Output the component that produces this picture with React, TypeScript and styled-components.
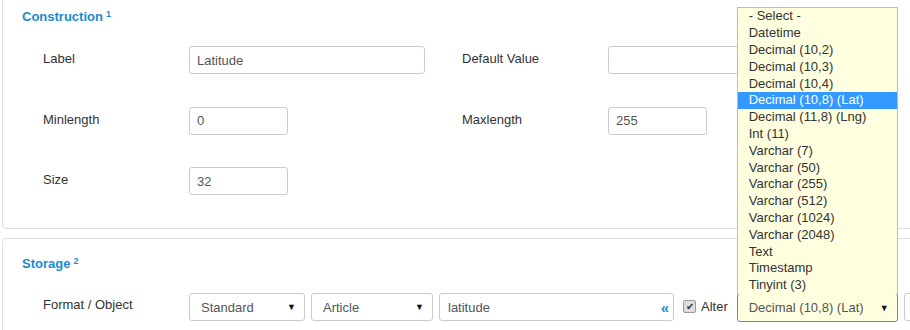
import React from 'react';
import styled, { createGlobalStyle } from 'styled-components';

const GlobalStyle = createGlobalStyle`
  html, body {
    margin: 0;
    padding: 0;
    background: #fff;
    overflow: hidden;
  }
  body {
    font-family: "Liberation Sans", Arial, sans-serif;
    font-size: 13px;
    color: #333;
  }
`;

const Page = styled.div`
  width: 910px;
  height: 330px;
  padding-left: 2px;
  box-sizing: border-box;
  overflow: hidden;
`;

const Panel = styled.section<{ $first?: boolean }>`
  width: 940px;
  box-sizing: border-box;
  border: 1px solid #dedede;
  border-radius: 4px;
  background: #fff;
  margin-top: ${p => (p.$first ? '-9px' : '9px')};
  padding: 16px 0 33px 19px;
`;

const Title = styled.h3<{ $gap: number }>`
  margin: 0 0 ${p => p.$gap}px;
  font-size: 13px;
  line-height: 18px;
  font-weight: bold;
  color: #1a8bd0;

  sup {
    font-size: 9px;
    vertical-align: top;
    line-height: 12px;
    margin-left: 3px;
  }
`;

const Row = styled.div`
  display: flex;
  align-items: flex-start;
  padding-left: 21px;
  margin-bottom: 32.5px;

  &:last-child {
    margin-bottom: 0;
  }
`;

const Group = styled.div`
  display: flex;
  align-items: flex-start;
  width: 419px;
`;

const Label = styled.label`
  width: 146px;
  flex-shrink: 0;
  padding-top: 5px;
  line-height: 16px;
  color: #333;
`;

const TextInput = styled.div<{ $w: number }>`
  width: ${p => p.$w}px;
  height: 28px;
  box-sizing: border-box;
  border: 1px solid #ccc;
  border-radius: 3px;
  background: #fff;
  padding: 0 8px 0 7px;
  display: flex;
  align-items: center;
  color: #555;
  font-size: 13px;
  position: relative;
  flex-shrink: 0;
`;

const Controls = styled.div`
  display: flex;
  align-items: center;
`;

const Select = styled(TextInput)<{ $focus?: boolean }>`
  padding: 0 8px 0 11px;
  justify-content: space-between;
  border-color: ${p => (p.$focus ? '#4d90e0' : '#ccc')};
  background: ${p => (p.$focus ? '#ffffe0' : '#fff')};
  height: ${p => (p.$focus ? '29px' : '28px')};
`;

const Arrow = styled.span`
  font-size: 9px;
  color: #111;
`;

const Guillemet = styled.span`
  position: absolute;
  right: 4px;
  top: 5px;
  color: #1a8bd0;
  font-weight: bold;
  font-size: 15px;
`;

const Check = styled.span`
  width: 11px;
  height: 11px;
  border: 1px solid #999;
  border-radius: 2px;
  background: #ddd;
  display: inline-flex;
  align-items: center;
  justify-content: center;
  font-size: 10px;
  color: #333;
  margin: -1px 5px 0 9px;
`;

const AlterText = styled.span`
  margin-top: -1px;
  margin-right: 9px;
  color: #333;
`;

const ListBox = styled.ul`
  position: absolute;
  left: -1px;
  right: -1px;
  bottom: 100%;
  margin: 0;
  padding: 0;
  list-style: none;
  background: #ffffe0;
  border: 1px solid #a9bde6;
  border-bottom: none;
`;

const Option = styled.li<{ $active?: boolean }>`
  height: 16.8px;
  line-height: 16.8px;
  padding-left: 11px;
  color: ${p => (p.$active ? '#fff' : '#333')};
  background: ${p => (p.$active ? '#3399ff' : 'transparent')};
  white-space: nowrap;
`;

const options = [
  '- Select -',
  'Datetime',
  'Decimal (10,2)',
  'Decimal (10,3)',
  'Decimal (10,4)',
  'Decimal (10,8) (Lat)',
  'Decimal (11,8) (Lng)',
  'Int (11)',
  'Varchar (7)',
  'Varchar (50)',
  'Varchar (255)',
  'Varchar (512)',
  'Varchar (1024)',
  'Varchar (2048)',
  'Text',
  'Timestamp',
  'Tinyint (3)',
];

export default function App() {
  return (
    <Page>
      <GlobalStyle />
      <Panel $first>
        <Title $gap={20}>
          Construction<sup>1</sup>
        </Title>
        <Row>
          <Group>
            <Label>Label</Label>
            <TextInput $w={236}>Latitude</TextInput>
          </Group>
          <Group>
            <Label>Default Value</Label>
            <TextInput $w={236} />
          </Group>
        </Row>
        <Row>
          <Group>
            <Label>Minlength</Label>
            <TextInput $w={99}>0</TextInput>
          </Group>
          <Group>
            <Label>Maxlength</Label>
            <TextInput $w={99}>255</TextInput>
          </Group>
        </Row>
        <Row>
          <Group>
            <Label>Size</Label>
            <TextInput $w={99}>32</TextInput>
          </Group>
        </Row>
      </Panel>
      <Panel>
        <Title $gap={19}>
          Storage<sup>2</sup>
        </Title>
        <Row>
          <Label>Format / Object</Label>
          <Controls>
            <Select $w={116} style={{ marginRight: 6 }}>
              Standard <Arrow>▼</Arrow>
            </Select>
            <Select $w={122} style={{ marginRight: 6 }}>
              Article <Arrow>▼</Arrow>
            </Select>
            <TextInput $w={235} style={{ paddingLeft: 8 }}>
              latitude
              <Guillemet>«</Guillemet>
            </TextInput>
            <Check>✔</Check>
            <AlterText>Alter</AlterText>
            <Select $w={161} $focus style={{ marginRight: 6, marginTop: 1 }}>
              Decimal (10,8) (Lat) <Arrow>▼</Arrow>
              <ListBox>
                {options.map(o => (
                  <Option key={o} $active={o === 'Decimal (10,8) (Lat)'}>
                    {o}
                  </Option>
                ))}
              </ListBox>
            </Select>
            <TextInput $w={60} />
          </Controls>
        </Row>
      </Panel>
    </Page>
  );
}
